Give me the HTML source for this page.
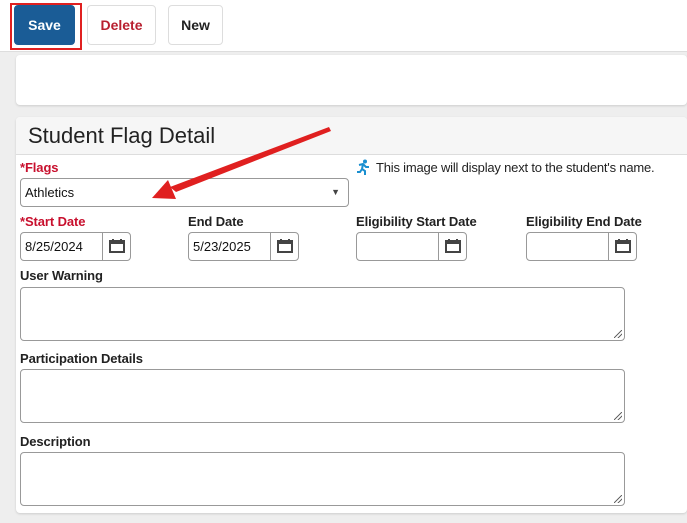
<!DOCTYPE html>
<html><head><style>
*{box-sizing:border-box;margin:0;padding:0}
body{width:687px;height:523px;background:#eeeeee;font-family:"Liberation Sans",Arial,sans-serif;position:relative;overflow:hidden;font-size:13px;color:#111}
.a{position:absolute}
.btn{position:absolute;top:5px;height:40px;border:1px solid #ddd;border-radius:4px;background:#fff;font-weight:bold;font-size:14px;text-align:center;line-height:38px}
.lbl{position:absolute;font-weight:bold;font-size:13px;color:#222;letter-spacing:-0.1px}
.red{color:#c8102e}
.in{position:absolute;height:29px;border:1px solid #999;border-radius:4px;background:#fff;font-size:13px;line-height:27px;padding-left:4px}
.cal{position:absolute;right:0;top:0;width:28px;height:27px;border-left:1px solid #999}
.ta{position:absolute;left:20px;width:605px;height:54px;border:1px solid #999;border-radius:4px;background:#fff}
.ta:after{content:"";position:absolute;right:2px;bottom:2px;width:8px;height:8px;background:linear-gradient(135deg,transparent 45%,#666 46%,#666 54%,transparent 55%,transparent 70%,#666 71%,#666 79%,transparent 80%)}
</style></head><body>
<div class="a" style="left:0;top:0;width:687px;height:52px;background:#fff;border-bottom:1px solid #ddd"></div>
<div class="a" style="left:10px;top:3px;width:72px;height:47px;border:2px solid #e02020"></div>
<div class="btn" style="left:14px;width:61px;background:#1a5c96;border-color:#1a5c96;color:#fff">Save</div>
<div class="btn" style="left:87px;width:69px;color:#b82030">Delete</div>
<div class="btn" style="left:168px;width:55px;color:#222">New</div>
<div class="a" style="left:16px;top:55px;width:671px;height:50px;background:#fff;border-radius:4px;box-shadow:0 1px 2px #ccc"></div>
<div class="a" style="left:16px;top:117px;width:671px;height:396px;background:#fff;border-radius:4px;box-shadow:0 1px 2px #ccc"></div>
<div class="a" style="left:16px;top:117px;width:671px;height:38px;background:#f6f6f6;border-bottom:1px solid #ddd;border-radius:4px 4px 0 0"></div>
<div class="a" style="left:28px;top:123px;font-size:22px;color:#222">Student Flag Detail</div>
<div class="lbl red" style="left:20px;top:160px">*Flags</div>
<div class="in" style="left:20px;top:178px;width:329px">Athletics<span style="position:absolute;right:8px;top:0;font-size:9px;color:#444">▼</span></div>
<svg class="a" style="left:356px;top:159px" width="14" height="16" viewBox="0 0 14 16"><circle cx="9" cy="2.5" r="2" fill="#1a8fd0"/><path d="M3 6l4-1 3 3 3 0M7 5l-1 5 3 2 0 4M6 10l-2 3-3 0" stroke="#1a8fd0" stroke-width="2" fill="none"/></svg>
<div class="a" style="left:376px;top:160px;font-size:13px;color:#222;letter-spacing:-0.2px">This image will display next to the student's name.</div>
<div class="lbl red" style="left:20px;top:214px">*Start Date</div>
<div class="lbl" style="left:188px;top:214px">End Date</div>
<div class="lbl" style="left:356px;top:214px">Eligibility Start Date</div>
<div class="lbl" style="left:526px;top:214px">Eligibility End Date</div>
<div class="in" style="left:20px;top:232px;width:111px">8/25/2024<span class="cal"><svg width="28" height="27"><rect x="7" y="8" width="14" height="11" fill="none" stroke="#444" stroke-width="2"/><rect x="7" y="8" width="14" height="3" fill="#444"/><path d="M10 6v3M18 6v3" stroke="#444" stroke-width="2"/></svg></span></div>
<div class="in" style="left:188px;top:232px;width:111px">5/23/2025<span class="cal"><svg width="28" height="27"><rect x="7" y="8" width="14" height="11" fill="none" stroke="#444" stroke-width="2"/><rect x="7" y="8" width="14" height="3" fill="#444"/><path d="M10 6v3M18 6v3" stroke="#444" stroke-width="2"/></svg></span></div>
<div class="in" style="left:356px;top:232px;width:111px"><span class="cal"><svg width="28" height="27"><rect x="7" y="8" width="14" height="11" fill="none" stroke="#444" stroke-width="2"/><rect x="7" y="8" width="14" height="3" fill="#444"/><path d="M10 6v3M18 6v3" stroke="#444" stroke-width="2"/></svg></span></div>
<div class="in" style="left:526px;top:232px;width:111px"><span class="cal"><svg width="28" height="27"><rect x="7" y="8" width="14" height="11" fill="none" stroke="#444" stroke-width="2"/><rect x="7" y="8" width="14" height="3" fill="#444"/><path d="M10 6v3M18 6v3" stroke="#444" stroke-width="2"/></svg></span></div>
<div class="lbl" style="left:20px;top:268px">User Warning</div>
<div class="ta" style="top:287px"></div>
<div class="lbl" style="left:20px;top:351px">Participation Details</div>
<div class="ta" style="top:369px"></div>
<div class="lbl" style="left:20px;top:434px">Description</div>
<div class="ta" style="top:452px"></div>
<svg class="a" style="left:0;top:0" width="687" height="523"><polygon points="329,127 331,131 176,192 170,187" fill="#e02020"/><polygon points="152,198 168,180 176,199" fill="#e02020"/></svg>
</body></html>
